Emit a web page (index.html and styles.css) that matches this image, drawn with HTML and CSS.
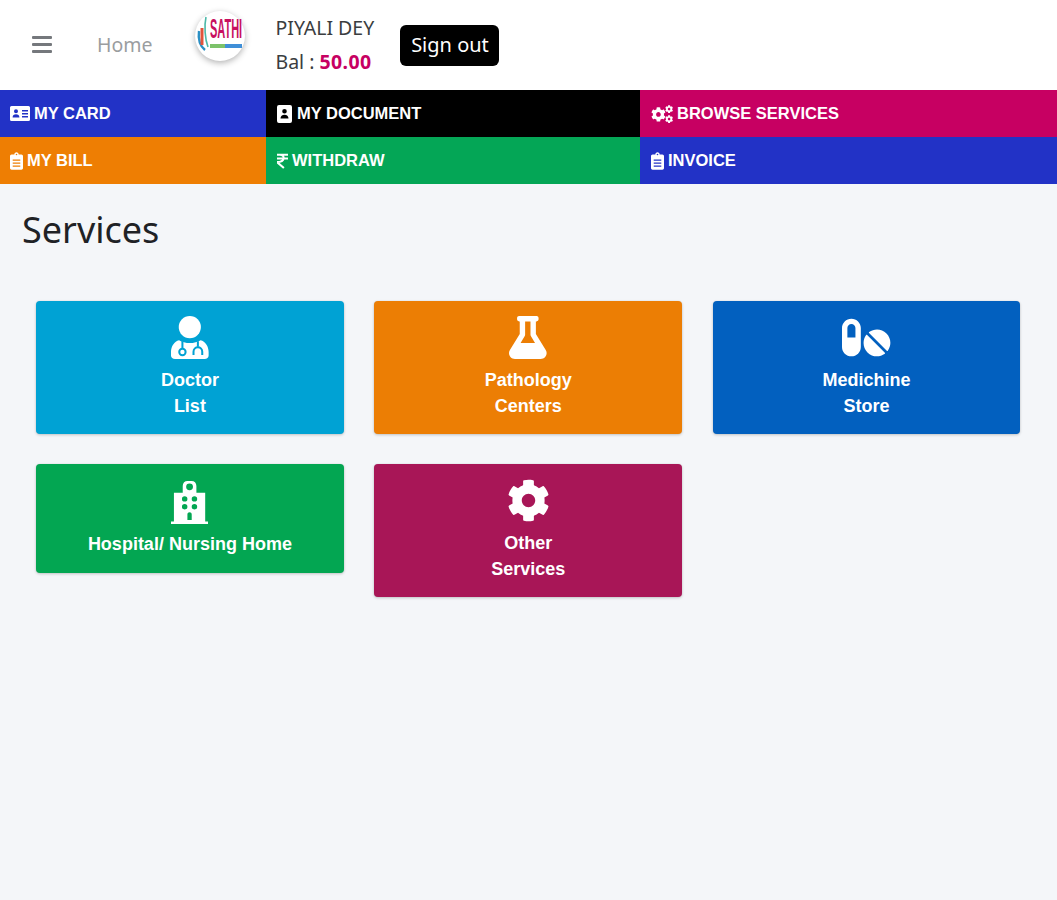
FILE: index.html
```html
<!DOCTYPE html>
<html lang="en">
<head>
<meta charset="utf-8">
<title>Services</title>
<link rel="stylesheet" href="styles.css">
</head>
<body>
<header class="topbar">
  <a class="burger" href="#" aria-label="Menu"><span></span><span></span><span></span></a>
  <a class="home" href="#">Home</a>
  <div class="logo">
    <svg viewBox="0 0 50 50" width="50" height="50">
      <path d="M4 20c-1 8 1 15 6 19" fill="none" stroke="#2a8fc4" stroke-width="2.400"/>
      <path d="M7 17v17" stroke="#e2543c" stroke-width="3"/>
      <path d="M11 6c-2 9-1 22 2 30" fill="none" stroke="#4cb8a8" stroke-width="1.600"/>
      <text class="logo-name" transform="translate(15 27) scale(1 2.500)">SATHI</text>
      <rect x="15" y="33" width="15" height="4" fill="#7cc26a"/>
      <rect x="30" y="33" width="17" height="4" fill="#3f8fd8"/>
    </svg>
  </div>
  <div class="user">
    <div>PIYALI DEY</div>
    <div>Bal : <b class="amount">50.00</b></div>
  </div>
  <a class="signout" href="#">Sign out</a>
</header>

<nav class="quick">
  <a class="q q-blue" href="#">
    <svg class="ic-card" viewBox="0 0 20 15"><path fill="currentColor" fill-rule="evenodd" d="M1.500 0h17A1.500 1.500 0 0 1 20 1.500v12a1.500 1.500 0 0 1-1.500 1.500h-17A1.500 1.500 0 0 1 0 13.500v-12A1.500 1.500 0 0 1 1.500 0zM6 3.200a2 2 0 1 0 0 4 2 2 0 0 0 0-4zM2.600 11.500h6.800c0-2-1.300-3.200-3.400-3.200s-3.400 1.200-3.400 3.200zM12 4v1.500h6V4zm0 3v1.500h6V7zm0 3v1.500h6V10z"/></svg>
    MY CARD</a>
  <a class="q q-black" href="#">
    <svg class="ic-doc" viewBox="0 0 15 18"><path fill="currentColor" fill-rule="evenodd" d="M2 0h11a2 2 0 0 1 2 2v14a2 2 0 0 1-2 2H2a2 2 0 0 1-2-2V2a2 2 0 0 1 2-2zm5.500 4a2.300 2.300 0 1 0 0 4.600 2.300 2.300 0 0 0 0-4.600zM3.500 13.500h8c0-2.300-1.600-3.700-4-3.700s-4 1.400-4 3.700z"/></svg>
    MY DOCUMENT</a>
  <a class="q q-pink" href="#">
    <svg class="ic-cogs" viewBox="0 0 22 18">
      <defs><path id="cog" d="M487.400 315.700l-42.600-24.600c4.300-23.200 4.300-47 0-70.200l42.600-24.600c4.900-2.800 7.100-8.600 5.500-14-11.100-35.600-30-67.800-54.700-94.600-3.800-4.100-10-5.100-14.800-2.300L380.800 110c-17.900-15.400-38.500-27.300-60.800-35.100V25.800c0-5.600-3.900-10.500-9.400-11.700-36.700-8.200-74.300-7.800-109.200 0-5.500 1.200-9.400 6.100-9.400 11.700V75c-22.200 7.900-42.800 19.800-60.800 35.100L88.700 85.500c-4.900-2.800-11-1.900-14.800 2.300-24.700 26.700-43.600 58.900-54.700 94.600-1.700 5.400.6 11.200 5.500 14L67.300 221c-4.300 23.200-4.300 47 0 70.200l-42.600 24.600c-4.900 2.800-7.100 8.600-5.500 14 11.100 35.600 30 67.800 54.700 94.600 3.800 4.100 10 5.100 14.800 2.300l42.600-24.600c17.900 15.400 38.500 27.300 60.800 35.100v49.200c0 5.600 3.900 10.500 9.400 11.700 36.700 8.200 74.300 7.800 109.200 0 5.500-1.200 9.400-6.100 9.400-11.700v-49.200c22.200-7.900 42.800-19.800 60.800-35.100l42.600 24.600c4.900 2.800 11 1.900 14.800-2.300 24.700-26.700 43.600-58.900 54.700-94.600 1.500-5.500-.7-11.300-5.600-14.100zM256 336c-44.100 0-80-35.900-80-80s35.900-80 80-80 80 35.900 80 80-35.900 80-80 80z"/></defs>
      <use href="#cog" fill="currentColor" transform="translate(0 2) scale(.029)"/>
      <use href="#cog" fill="currentColor" transform="translate(14 0) scale(.016)"/>
      <use href="#cog" fill="currentColor" transform="translate(14 10) scale(.016)"/>
    </svg>
    BROWSE SERVICES</a>
  <a class="q q-orange" href="#">
    <svg class="ic-clip" viewBox="0 0 384 512"><path fill="currentColor" fill-rule="evenodd" d="M336 64h-80c0-35.300-28.700-64-64-64s-64 28.700-64 64H48C21.500 64 0 85.500 0 112v352c0 26.500 21.500 48 48 48h288c26.500 0 48-21.500 48-48V112c0-26.500-21.500-48-48-48zM192 40a24 24 0 1 1 0 48 24 24 0 0 1 0-48zM80 210v36h224v-36zm0 90v36h224v-36zm0 90v36h224v-36z"/></svg>
    MY BILL</a>
  <a class="q q-green" href="#">
    <svg class="ic-rupee" viewBox="0 0 12 16"><path fill="none" stroke="currentColor" stroke-width="2.200" d="M0 1.200h12M0 5.300h12M3 1.200c6 0 6.500 8-3 8l7.500 6.500"/></svg>
    WITHDRAW</a>
  <a class="q q-blue" href="#">
    <svg class="ic-clip" viewBox="0 0 384 512"><path fill="currentColor" fill-rule="evenodd" d="M336 64h-80c0-35.300-28.700-64-64-64s-64 28.700-64 64H48C21.500 64 0 85.500 0 112v352c0 26.500 21.500 48 48 48h288c26.500 0 48-21.500 48-48V112c0-26.500-21.500-48-48-48zM192 40a24 24 0 1 1 0 48 24 24 0 0 1 0-48zM80 210v36h224v-36zm0 90v36h224v-36zm0 90v36h224v-36z"/></svg>
    INVOICE</a>
</nav>

<main class="content">
  <h1 class="title">Services</h1>
  <section class="cards">
    <a class="card c-sky" href="#">
      <svg class="ic" viewBox="0 0 448 512">
        <circle cx="224" cy="132" r="132" fill="currentColor"/>
        <path fill="currentColor" d="M96 288C40 300 0 360 0 430v40c0 25 20 42 48 42h352c28 0 48-17 48-42v-40c0-70-40-130-96-142-32 20-82 34-128 34s-96-14-128-34z"/>
        <g class="scope">
          <path d="M136 300v86"/>
          <circle cx="136" cy="428" r="38"/>
          <path d="M320 300v60M268 464v-38c0-72 104-72 104 0v38"/>
        </g>
      </svg>
      <span>Doctor<br>List</span>
    </a>
    <a class="card c-orange" href="#">
      <svg class="ic" viewBox="0 0 448 512"><path fill="currentColor" d="M437.200 403.500L320 215V64h8c13.300 0 24-10.700 24-24V24c0-13.300-10.700-24-24-24H120c-13.300 0-24 10.700-24 24v16c0 13.300 10.700 24 24 24h8v151L10.800 403.500C-18.500 450.600 15.300 512 70.900 512h306.200c55.700 0 89.400-61.500 60.100-108.500zM137.900 320l48.200-77.600c3.700-5.200 5.800-11.600 5.800-18.400V64h64v160c0 6.900 2.200 13.200 5.800 18.400l48.200 77.600h-172z"/></svg>
      <span>Pathology<br>Centers</span>
    </a>
    <a class="card c-blue" href="#">
      <svg class="ic" viewBox="0 0 576 512"><path fill="currentColor" d="M112 32C50.100 32 0 82.100 0 144v224c0 61.900 50.100 112 112 112s112-50.100 112-112V144c0-61.900-50.100-112-112-112zm48 224H64V144c0-26.500 21.500-48 48-48s48 21.500 48 48v112zm139.700-29.700c-3.500-3.500-9.400-3.100-12.300.8-45.300 62.500-40.400 150.100 15.900 206.400 56.300 56.300 143.900 61.200 206.400 15.900 4-2.900 4.300-8.800.8-12.300L299.700 226.300zm229.800-19c-56.300-56.300-143.900-61.200-206.400-15.900-4 2.900-4.300 8.800-.8 12.300l210.800 210.800c3.500 3.500 9.400 3.100 12.300-.8 45.300-62.600 40.500-150.100-15.900-206.400z"/></svg>
      <span>Medichine<br>Store</span>
    </a>
    <a class="card c-green" href="#">
      <svg class="ic ic-hosp" viewBox="0 0 38 44"><path fill="currentColor" fill-rule="evenodd" d="M0 44v-2.500h3V12h9V5c0-3 2-5 5-5h4c3 0 5 2 5 5v7h9v29.500h3V44zM19 2.500a3.500 3.500 0 1 0 0 7 3.500 3.500 0 0 0 0-7zM14 15.500a2.800 2.800 0 1 0 0 5.600 2.800 2.800 0 0 0 0-5.600zm10 0a2.800 2.800 0 1 0 0 5.600 2.800 2.800 0 0 0 0-5.600zm-10 8a2.800 2.800 0 1 0 0 5.600 2.800 2.800 0 0 0 0-5.600zm10 0a2.800 2.800 0 1 0 0 5.600 2.800 2.800 0 0 0 0-5.600zM19 32c-1.300 0-2.200.9-2.200 2.200V40h4.400v-5.800c0-1.300-.9-2.200-2.200-2.200z"/></svg>
      <span>Hospital/ Nursing Home</span>
    </a>
    <a class="card c-wine" href="#">
      <svg class="ic" viewBox="0 0 512 512"><use href="#cog" fill="currentColor"/></svg>
      <span>Other<br>Services</span>
    </a>
  </section>
</main>
</body>
</html>
```

FILE: styles.css
```css
* { box-sizing: border-box; }

html, body { margin: 0; padding: 0; }

body {
  min-height: 900px;
  background: #f4f6f9;
  font-family: "Noto Sans", "Open Sans", sans-serif;
  color: #222;
}

a { text-decoration: none; color: inherit; }

.topbar {
  height: 90px;
  background: #fff;
  display: flex;
  align-items: center;
  padding-left: 32px;
}

.burger {
  width: 20px;
  display: flex;
  flex-direction: column;
  gap: 4px;
  margin-bottom: 2px;
}

.burger span {
  height: 3px;
  background: #75787c;
  border-radius: 1px;
}

.home {
  margin-left: 45px;
  padding-bottom: 2px;
  font-size: 19.500px;
  color: #9a9da0;
}

.logo {
  flex: none;
  width: 50px;
  height: 50px;
  margin: -18px 0 0 43px;
  border-radius: 50%;
  background: #fff;
  box-shadow: 0 2px 6px rgba(0, 0, 0, .3);
}

.logo svg { display: block; overflow: visible; }

.logo-name {
  font: bold 11px "Liberation Sans", sans-serif;
  fill: #c8105f;
}

.user {
  width: 98px;
  margin-left: 30px;
  font-size: 19.500px;
  line-height: 34px;
  color: #3a3d40;
  white-space: nowrap;
}

.amount { color: #c70062; font-weight: 700; letter-spacing: .4px; }

.signout {
  margin-left: 27px;
  width: 99px;
  height: 41px;
  padding-bottom: 2px;
  border-radius: 6px;
  background: #000;
  color: #fff;
  font-size: 20px;
  display: flex;
  align-items: center;
  justify-content: center;
}

.quick {
  display: grid;
  grid-template-columns: 266px 374px 417px;
  grid-auto-rows: 47px;
}

.q {
  display: flex;
  align-items: center;
  gap: 4px;
  padding-left: 10px;
  color: #fff;
  font: bold 16.500px "Liberation Sans", Arial, sans-serif;
}

.q-black, .q-green { padding-left: 11px; }
.q-pink { padding-left: 11px; }
.q-blue:last-child { padding-left: 11px; }

.q-blue { background: #2232c6; }
.q-black { background: #000; }
.q-pink { background: #c70062; }
.q-orange { background: #ee7e03; }
.q-green { background: #04a656; }

.ic-card { width: 20px; height: 15px; }
.ic-doc { width: 15px; height: 18px; margin-right: 1px; }
.ic-cogs { width: 22px; height: 18px; }
.ic-clip { width: 13px; height: 18px; }
.ic-rupee { width: 11px; height: 16px; }

.content { padding: 22px 36px 0; }

.title {
  margin: 0 0 0 -14px;
  font-size: 36px;
  font-weight: 400;
  line-height: 48px;
  color: #1f2226;
}

.cards {
  display: grid;
  grid-template-columns: repeat(3, 307.800px);
  column-gap: 30.500px;
  row-gap: 30px;
  align-items: start;
  margin-top: 47px;
}

.card {
  display: flex;
  flex-direction: column;
  align-items: center;
  padding: 15px 8px;
  border-radius: 4px;
  color: #fff;
  font: bold 18px/25.500px "Liberation Sans", Arial, sans-serif;
  text-align: center;
  box-shadow: 0 0 1px rgba(0, 0, 0, .13), 0 1px 3px rgba(0, 0, 0, .2);
}

.ic { height: 43px; width: auto; margin-bottom: 9px; display: block; }
.ic-hosp { margin-top: 2px; margin-bottom: 8px; }

.scope { fill: none; stroke: #00a2d4; stroke-width: 24; }

.c-sky { background: #00a2d4; }
.c-orange { background: #ec7e04; }
.c-blue { background: #0260bf; }
.c-green { background: #03a652; }
.c-wine { background: #a81657; }
```
